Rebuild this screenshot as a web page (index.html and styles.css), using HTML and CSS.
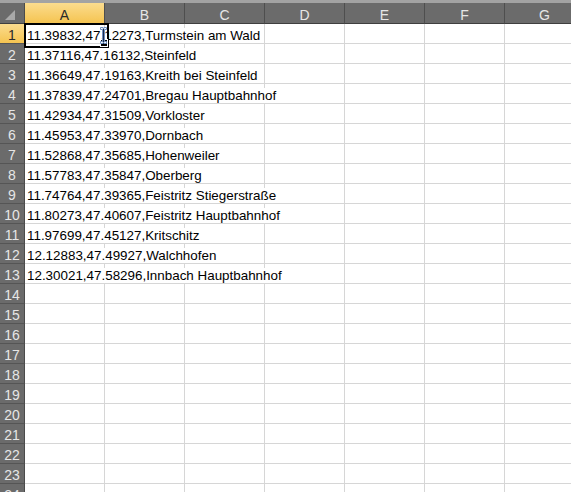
FILE: index.html
```html
<!DOCTYPE html>
<html lang="de">
<head>
<meta charset="utf-8">
<title>orte.csv</title>
<link rel="stylesheet" href="styles.css">
</head>
<body>
<div class="sheet">
  <div class="top-edge"></div>
  <div class="grid">
    <div class="corner">
      <svg class="corner-mark" width="10" height="10" viewBox="0 0 10 10"><polygon points="10,0 10,10 0,10" /></svg>
    </div>
    <div class="col-head is-active">A</div>
    <div class="col-head">B</div>
    <div class="col-head">C</div>
    <div class="col-head">D</div>
    <div class="col-head">E</div>
    <div class="col-head">F</div>
    <div class="col-head">G</div>

    <div class="row-head is-active">1</div>
    <div class="cell is-current"><span class="val">11.39832,47.12273,Turmstein am Wald</span></div>
    <div class="cell"></div><div class="cell"></div><div class="cell"></div><div class="cell"></div><div class="cell"></div><div class="cell"></div>

    <div class="row-head">2</div>
    <div class="cell"><span class="val">11.37116,47.16132,Steinfeld</span></div>
    <div class="cell"></div><div class="cell"></div><div class="cell"></div><div class="cell"></div><div class="cell"></div><div class="cell"></div>

    <div class="row-head">3</div>
    <div class="cell"><span class="val">11.36649,47.19163,Kreith bei Steinfeld</span></div>
    <div class="cell"></div><div class="cell"></div><div class="cell"></div><div class="cell"></div><div class="cell"></div><div class="cell"></div>

    <div class="row-head">4</div>
    <div class="cell"><span class="val">11.37839,47.24701,Bregau Hauptbahnhof</span></div>
    <div class="cell"></div><div class="cell"></div><div class="cell"></div><div class="cell"></div><div class="cell"></div><div class="cell"></div>

    <div class="row-head">5</div>
    <div class="cell"><span class="val">11.42934,47.31509,Vorkloster</span></div>
    <div class="cell"></div><div class="cell"></div><div class="cell"></div><div class="cell"></div><div class="cell"></div><div class="cell"></div>

    <div class="row-head">6</div>
    <div class="cell"><span class="val">11.45953,47.33970,Dornbach</span></div>
    <div class="cell"></div><div class="cell"></div><div class="cell"></div><div class="cell"></div><div class="cell"></div><div class="cell"></div>

    <div class="row-head">7</div>
    <div class="cell"><span class="val">11.52868,47.35685,Hohenweiler</span></div>
    <div class="cell"></div><div class="cell"></div><div class="cell"></div><div class="cell"></div><div class="cell"></div><div class="cell"></div>

    <div class="row-head">8</div>
    <div class="cell"><span class="val">11.57783,47.35847,Oberberg</span></div>
    <div class="cell"></div><div class="cell"></div><div class="cell"></div><div class="cell"></div><div class="cell"></div><div class="cell"></div>

    <div class="row-head">9</div>
    <div class="cell"><span class="val">11.74764,47.39365,Feistritz Stiegerstraße</span></div>
    <div class="cell"></div><div class="cell"></div><div class="cell"></div><div class="cell"></div><div class="cell"></div><div class="cell"></div>

    <div class="row-head">10</div>
    <div class="cell"><span class="val">11.80273,47.40607,Feistritz Hauptbahnhof</span></div>
    <div class="cell"></div><div class="cell"></div><div class="cell"></div><div class="cell"></div><div class="cell"></div><div class="cell"></div>

    <div class="row-head">11</div>
    <div class="cell"><span class="val">11.97699,47.45127,Kritschitz</span></div>
    <div class="cell"></div><div class="cell"></div><div class="cell"></div><div class="cell"></div><div class="cell"></div><div class="cell"></div>

    <div class="row-head">12</div>
    <div class="cell"><span class="val">12.12883,47.49927,Walchhofen</span></div>
    <div class="cell"></div><div class="cell"></div><div class="cell"></div><div class="cell"></div><div class="cell"></div><div class="cell"></div>

    <div class="row-head">13</div>
    <div class="cell"><span class="val">12.30021,47.58296,Innbach Hauptbahnhof</span></div>
    <div class="cell"></div><div class="cell"></div><div class="cell"></div><div class="cell"></div><div class="cell"></div><div class="cell"></div>

    <div class="row-head">14</div>
    <div class="cell"></div><div class="cell"></div><div class="cell"></div><div class="cell"></div><div class="cell"></div><div class="cell"></div><div class="cell"></div>
    <div class="row-head">15</div>
    <div class="cell"></div><div class="cell"></div><div class="cell"></div><div class="cell"></div><div class="cell"></div><div class="cell"></div><div class="cell"></div>
    <div class="row-head">16</div>
    <div class="cell"></div><div class="cell"></div><div class="cell"></div><div class="cell"></div><div class="cell"></div><div class="cell"></div><div class="cell"></div>
    <div class="row-head">17</div>
    <div class="cell"></div><div class="cell"></div><div class="cell"></div><div class="cell"></div><div class="cell"></div><div class="cell"></div><div class="cell"></div>
    <div class="row-head">18</div>
    <div class="cell"></div><div class="cell"></div><div class="cell"></div><div class="cell"></div><div class="cell"></div><div class="cell"></div><div class="cell"></div>
    <div class="row-head">19</div>
    <div class="cell"></div><div class="cell"></div><div class="cell"></div><div class="cell"></div><div class="cell"></div><div class="cell"></div><div class="cell"></div>
    <div class="row-head">20</div>
    <div class="cell"></div><div class="cell"></div><div class="cell"></div><div class="cell"></div><div class="cell"></div><div class="cell"></div><div class="cell"></div>
    <div class="row-head">21</div>
    <div class="cell"></div><div class="cell"></div><div class="cell"></div><div class="cell"></div><div class="cell"></div><div class="cell"></div><div class="cell"></div>
    <div class="row-head">22</div>
    <div class="cell"></div><div class="cell"></div><div class="cell"></div><div class="cell"></div><div class="cell"></div><div class="cell"></div><div class="cell"></div>
    <div class="row-head">23</div>
    <div class="cell"></div><div class="cell"></div><div class="cell"></div><div class="cell"></div><div class="cell"></div><div class="cell"></div><div class="cell"></div>
    <div class="row-head">24</div>
    <div class="cell"></div><div class="cell"></div><div class="cell"></div><div class="cell"></div><div class="cell"></div><div class="cell"></div><div class="cell"></div>
  </div>

  <!-- mouse pointer (I-beam) resting over A1 -->
  <svg class="pointer" width="7" height="17" viewBox="0 0 7 17">
    <path d="M0.5 0.5h2.5v1h1v-1h2.5v2h-2v12h2v2h-2.5v-1h-1v1h-2.5v-2h2v-12h-2z" fill="#ffffff" stroke="#6c8fc0" stroke-width="1"/>
    <path d="M3 2h1v13h-1z" fill="#1a2a4a"/>
  </svg>
</div>
</body>
</html>
```

FILE: styles.css
```css
* {
  box-sizing: border-box;
}

html, body {
  margin: 0;
  padding: 0;
  background: #ffffff;
}

.sheet {
  position: relative;
  width: 571px;
  height: 492px;
  overflow: hidden;
  font-family: "Liberation Sans", Arial, sans-serif;
  font-size: 13.4px;
}

.top-edge {
  height: 3px;
  background: #a3a3a3;
}

.grid {
  display: grid;
  grid-template-columns: 25px repeat(7, 80px);
  grid-template-rows: 21px repeat(24, 20px);
  width: 585px;
}

/* header strip */
.corner,
.col-head,
.row-head {
  background: #6b6b6b;
  color: #e6e6e6;
  font-size: 14px;
  line-height: 15px;
  display: flex;
  align-items: flex-end;
  justify-content: center;
}

.corner {
  border-right: 1px solid #4b4b4b;
  border-bottom: 1px solid #3f3f3f;
  padding: 0 4px 3px 0;
}

.corner-mark {
  display: block;
  fill: #a9a9a9;
}

.col-head {
  border-right: 1px solid #4e4e4e;
  border-bottom: 1px solid #3f3f3f;
}

.row-head {
  border-right: 1px solid #4b4b4b;
  border-bottom: 1px solid #555555;
}

.col-head.is-active,
.row-head.is-active {
  background: linear-gradient(#fbdc8e, #f5c451);
  color: #2a2a2a;
}

.col-head.is-active {
  border-bottom-color: #c5962e;
}

/* worksheet cells */
.cell {
  border-right: 1px solid #d6d6d6;
  border-bottom: 1px solid #d6d6d6;
  padding-left: 2px;
  line-height: 15px;
  display: flex;
  align-items: flex-end;
  white-space: nowrap;
  color: #000000;
}

/* text running past its own cell hides the gridlines it crosses */
.val {
  position: relative;
  z-index: 1;
  background: #ffffff;
  padding-right: 1px;
}

.cell.is-current {
  position: relative;
}

.cell.is-current::after {
  content: "";
  position: absolute;
  left: -1px;
  top: -1px;
  width: 81px;
  height: 21px;
  border: 2px solid #000000;
  z-index: 2;
}

.cell.is-current::before {
  content: "";
  position: absolute;
  left: 75px;
  top: 15px;
  width: 6px;
  height: 6px;
  background: #000000;
  border: 1px solid #ffffff;
  z-index: 3;
}

.pointer {
  position: absolute;
  left: 100px;
  top: 27px;
  z-index: 5;
}
```
